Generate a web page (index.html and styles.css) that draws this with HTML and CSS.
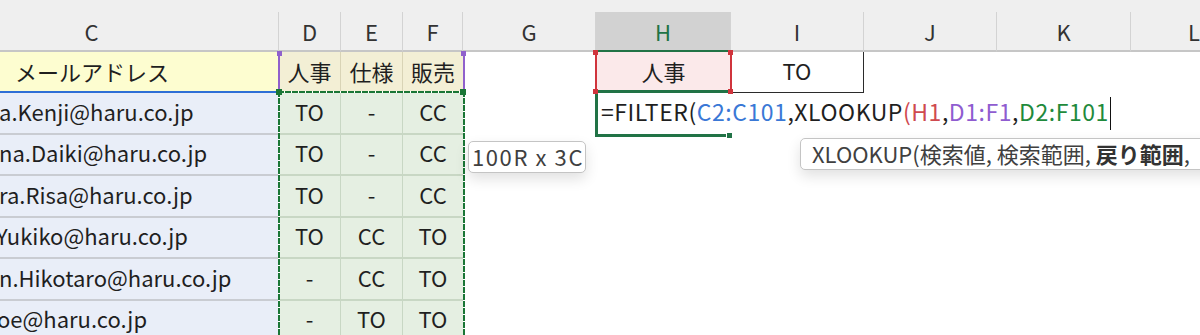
FILE: index.html
```html
<!DOCTYPE html>
<html lang="ja">
<head>
<meta charset="utf-8">
<title>Sheet</title>
<link rel="stylesheet" href="styles.css">
</head>
<body>
<div class="sheet">
  <div class="topstrip"></div>
  <div class="grid">
    <div class="hd hd-c">C</div>
    <div class="hd">D</div>
    <div class="hd">E</div>
    <div class="hd">F</div>
    <div class="hd">G</div>
    <div class="hd hd-sel">H</div>
    <div class="hd">I</div>
    <div class="hd">J</div>
    <div class="hd">K</div>
    <div class="hd hd-l">L</div>

    <div class="cell c1">メールアドレス</div>
    <div class="cell t1">人事</div>
    <div class="cell t1">仕様</div>
    <div class="cell t1 last">販売</div>
    <div class="cell"></div>
    <div class="cell h1">人事</div>
    <div class="cell i1">TO</div>
    <div class="cell"></div>
    <div class="cell"></div>
    <div class="cell"></div>

    <div class="cell em"><span class="off0">a.Kenji@haru.co.jp</span></div>
    <div class="cell g">TO</div>
    <div class="cell g">-</div>
    <div class="cell g last">CC</div>
    <div class="cell"></div>
    <div class="cell fx"><span class="fx-text">=FILTER(<span class="r-blue">C2:C101</span>,XLOOKUP<span class="r-red">(H1</span>,<span class="r-purple">D1:F1</span>,<span class="r-green">D2:F101</span></span><span class="caret"></span></div>
    <div class="cell"></div>
    <div class="cell"></div>
    <div class="cell"></div>
    <div class="cell"></div>

    <div class="cell em"><span class="off0">na.Daiki@haru.co.jp</span></div>
    <div class="cell g">TO</div>
    <div class="cell g">-</div>
    <div class="cell g last">CC</div>
    <div class="cell"></div><div class="cell"></div><div class="cell"></div><div class="cell"></div><div class="cell"></div><div class="cell"></div>

    <div class="cell em"><span class="off0">ra.Risa@haru.co.jp</span></div>
    <div class="cell g">TO</div>
    <div class="cell g">-</div>
    <div class="cell g last">CC</div>
    <div class="cell"></div><div class="cell"></div><div class="cell"></div><div class="cell"></div><div class="cell"></div><div class="cell"></div>

    <div class="cell em"><span class="off-y">Yukiko@haru.co.jp</span></div>
    <div class="cell g">TO</div>
    <div class="cell g">CC</div>
    <div class="cell g last">TO</div>
    <div class="cell"></div><div class="cell"></div><div class="cell"></div><div class="cell"></div><div class="cell"></div><div class="cell"></div>

    <div class="cell em"><span class="off0">n.Hikotaro@haru.co.jp</span></div>
    <div class="cell g">-</div>
    <div class="cell g">CC</div>
    <div class="cell g last">TO</div>
    <div class="cell"></div><div class="cell"></div><div class="cell"></div><div class="cell"></div><div class="cell"></div><div class="cell"></div>

    <div class="cell em"><span class="off-o">oe@haru.co.jp</span></div>
    <div class="cell g">-</div>
    <div class="cell g">TO</div>
    <div class="cell g last">TO</div>
    <div class="cell"></div><div class="cell"></div><div class="cell"></div><div class="cell"></div><div class="cell"></div><div class="cell"></div>
  </div>

  <!-- reference range overlays -->
  <div class="rng-blue-top"></div>
  <div class="rng-purple"></div>
  <div class="rng-green"></div>
  <div class="rng-red"></div>
  <div class="active-cell"></div>
  <span class="sq sq-p1"></span><span class="sq sq-p2"></span>
  <span class="sq sq-g1"></span><span class="sq sq-g2"></span>
  <span class="sq sq-r1"></span><span class="sq sq-r2"></span><span class="sq sq-r3"></span><span class="sq sq-r4"></span>
  <span class="fill-handle"></span>

  <div class="tip tip-size"><span>100R x 3C</span></div>
  <div class="tip tip-fn"><span>XLOOKUP(検索値, 検索範囲, <b>戻り範囲</b>, </span></div>
</div>
</body>
</html>
```

FILE: styles.css
```css
* { box-sizing: border-box; }
html, body { margin: 0; padding: 0; background: #ffffff; }
body {
  font-family: "Noto Sans CJK JP", "Noto Sans", sans-serif;
  color: #1f1f1f;
}
.sheet {
  position: relative;
  width: 1200px;
  height: 335px;
  overflow: hidden;
  background: #ffffff;
}
.topstrip { height: 12px; background: #efefef; }
.grid {
  display: grid;
  grid-template-columns: 279px 62px 62px 60px 133px 135px 133px 133px 134px 69px;
  grid-template-rows: 40px 41px repeat(6, 41.5px);
}
.hd {
  background: #efefef;
  border-right: 1px solid #d3d3d3;
  border-bottom: 2px solid #c6c6c6;
  display: flex;
  align-items: center;
  justify-content: center;
  font-size: 22px;
  color: #333333;
  line-height: 1;
}
.hd-c { padding-right: 95px; }
.hd-l { justify-content: flex-start; padding-left: 57px; border-right: none; }
.hd-sel {
  background: #d2d2d2;
  color: #217346;
  border-bottom: 2px solid #217346;
}
.cell {
  display: flex;
  align-items: center;
  justify-content: center;
  font-size: 22px;
  line-height: 1;
  white-space: nowrap;
  min-width: 0;
  padding-bottom: 4px;
}
.c1 {
  background: #fdfdd0;
  justify-content: flex-start;
  padding-left: 15px;
}
.t1 {
  background: #f3efd5;
  border-right: 1px solid #d9d4b6;
}
.t1.last { border-right: none; }
.h1 { background: #fbe9ea; }
.i1 {
  border-right: 1px solid #2b2b2b;
  border-bottom: 1px solid #2b2b2b;
}
.em {
  background: #e9eef8;
  justify-content: flex-start;
  overflow: hidden;
  border-bottom: 2px solid #c9ccd2;
}
.off0 { margin-left: -1px; }
.off-y { margin-left: -4px; }
.off-o { margin-left: -3px; }
.g {
  background: #e5efe2;
  border-right: 1px solid #c8d7c4;
  border-bottom: 2px solid #c8d7c4;
}
.g.last { border-right: none; }
.fx {
  justify-content: flex-start;
  padding-left: 5px;
  overflow: visible;
  position: relative;
  z-index: 2;
}
.fx-text {
  flex-shrink: 0;
  font-size: 23px;
  letter-spacing: 0.55px;
}
.r-blue { color: #3a78d6; }
.r-red { color: #cf4a4f; }
.r-purple { color: #8f5cd0; }
.r-green { color: #1f8a3c; }
.caret {
  flex-shrink: 0;
  display: block;
  width: 1px;
  height: 33px;
  background: #111111;
  margin-left: 1px;
  margin-top: 3px;
}

/* range outlines */
.rng-blue-top {
  position: absolute;
  left: 0; top: 91px;
  width: 279px; height: 2px;
  background: #2e6fd6;
}
.rng-purple {
  position: absolute;
  left: 278px; top: 52px;
  width: 187px; height: 40px;
  border-left: 2px solid #9061cc;
  border-right: 2px solid #9061cc;
}
.rng-green {
  position: absolute;
  left: 278px; top: 91px;
  width: 187px; height: 260px;
  background:
    repeating-linear-gradient(90deg, #1a7636 0 6px, #ffffff 6px 7px) top left / 100% 2px no-repeat,
    repeating-linear-gradient(180deg, #1a7636 0 6px, #ffffff 6px 7px) top left / 2px 100% no-repeat,
    repeating-linear-gradient(180deg, #1a7636 0 6px, #ffffff 6px 7px) top right / 2px 100% no-repeat;
}
.rng-red {
  position: absolute;
  left: 595px; top: 52px;
  width: 137px; height: 40px;
  border-left: 2px solid #d0343c;
  border-right: 2px solid #d0343c;
}
.active-cell {
  position: absolute;
  left: 595px; top: 90px;
  width: 137px; height: 47px;
  border-left: 3px solid #217346;
  border-top: 3px solid #217346;
  border-bottom: 3px solid #217346;
}
.sq { position: absolute; width: 5px; height: 5px; }
.sq-p1 { left: 277px; top: 51px; background: #9061cc; }
.sq-p2 { left: 461px; top: 51px; background: #9061cc; }
.sq-g1 { left: 276px; top: 89px; width: 6px; height: 6px; background: #1a7636; }
.sq-g2 { left: 460px; top: 89px; width: 6px; height: 6px; background: #1a7636; }
.sq-r1 { left: 593px; top: 50px; background: #d0343c; }
.sq-r2 { left: 728px; top: 50px; background: #d0343c; }
.sq-r3 { left: 593px; top: 89px; background: #d0343c; }
.sq-r4 { left: 728px; top: 89px; background: #d0343c; }
.fill-handle {
  position: absolute;
  left: 726px; top: 132px;
  width: 7px; height: 7px;
  background: #217346;
  border: 1px solid #ffffff;
}

/* tooltips */
.tip {
  position: absolute;
  background: #ffffff;
  border: 1px solid #c4c4c4;
  border-radius: 5px;
  box-shadow: 0 6px 14px rgba(0, 0, 0, 0.12);
  color: #404040;
  white-space: pre;
  display: flex;
  align-items: center;
  line-height: 1;
  padding-bottom: 2px;
}
.tip-size {
  left: 468px; top: 141px;
  width: 118px; height: 32px;
  padding-left: 3px;
  font-size: 22px;
  letter-spacing: 1.6px;
}
.tip-fn {
  left: 800px; top: 138px;
  width: 440px; height: 32px;
  padding-left: 11px;
  font-size: 22px;
  letter-spacing: 0;
}
.tip-fn b { font-weight: 700; color: #333333; }
```
